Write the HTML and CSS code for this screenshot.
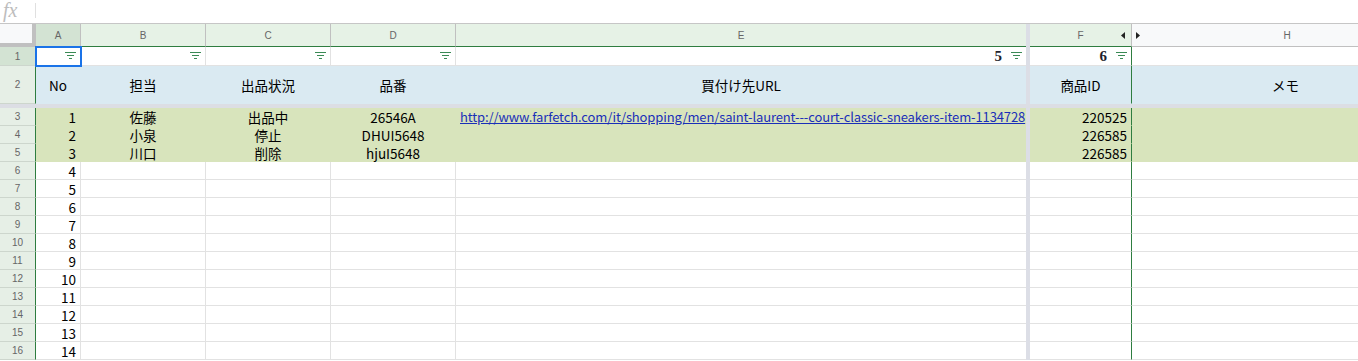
FILE: index.html
```html
<!DOCTYPE html>
<html lang="ja">
<head>
<meta charset="utf-8">
<title>Sheet</title>
<link rel="stylesheet" href="styles.css">
</head>
<body>
<div class="fbar"><span class="fx">fx</span><span class="fsep"></span></div>
<div class="sheet">
  <div class="row hdr">
    <div class="corner"></div>
    <div class="ch act">A</div>
    <div class="ch">B</div>
    <div class="ch">C</div>
    <div class="ch">D</div>
    <div class="ch ce">E</div>
    <div class="fz"></div>
    <div class="ch cf">F<svg class="arr al" width="4" height="7" viewBox="0 0 4 7"><path d="M4 0v7L0 3.5z" fill="#222"/></svg></div>
    <div class="ch off"><svg class="arr ar" width="4" height="7" viewBox="0 0 4 7"><path d="M0 0v7l4-3.5z" fill="#222"/></svg>H</div>
  </div>
  <div class="row flt">
    <div class="rh act">1</div>
    <div class="c sel"><svg class="fi" width="11" height="8" viewBox="0 0 11 8"><path d="M0 .5h11M2 3.5h7M4 6.5h3" stroke="#3a8a55" stroke-width="1"/></svg></div>
    <div class="c"><svg class="fi" width="11" height="8" viewBox="0 0 11 8"><path d="M0 .5h11M2 3.5h7M4 6.5h3" stroke="#3a8a55" stroke-width="1"/></svg></div>
    <div class="c"><svg class="fi" width="11" height="8" viewBox="0 0 11 8"><path d="M0 .5h11M2 3.5h7M4 6.5h3" stroke="#3a8a55" stroke-width="1"/></svg></div>
    <div class="c"><svg class="fi" width="11" height="8" viewBox="0 0 11 8"><path d="M0 .5h11M2 3.5h7M4 6.5h3" stroke="#3a8a55" stroke-width="1"/></svg></div>
    <div class="c ce"><b class="cnt">5</b><svg class="fi" width="11" height="8" viewBox="0 0 11 8"><path d="M0 .5h11M2 3.5h7M4 6.5h3" stroke="#3a8a55" stroke-width="1"/></svg></div>
    <div class="fz"></div>
    <div class="c cf"><b class="cnt">6</b><svg class="fi" width="11" height="8" viewBox="0 0 11 8"><path d="M0 .5h11M2 3.5h7M4 6.5h3" stroke="#3a8a55" stroke-width="1"/></svg></div>
    <div class="c ch0"></div>
  </div>
  <div class="row hd">
    <div class="rh">2</div>
    <div class="c m">No</div>
    <div class="c m">担当</div>
    <div class="c m">出品状況</div>
    <div class="c m">品番</div>
    <div class="c m ce">買付け先URL</div>
    <div class="fz"></div>
    <div class="c m cf">商品ID</div>
    <div class="c m ch0">メモ</div>
  </div>
  <div class="fzrow"></div>
  <div class="row ol">
    <div class="rh">3</div>
    <div class="c r">1</div>
    <div class="c m">佐藤</div>
    <div class="c m">出品中</div>
    <div class="c m">26546A</div>
    <div class="c ce url"><a class="lnk" href="#">http://www.farfetch.com/it/shopping/men/saint-laurent---court-classic-sneakers-item-1134728</a></div>
    <div class="fz"></div>
    <div class="c r cf">220525</div>
    <div class="c ch0"></div>
  </div>
  <div class="row ol">
    <div class="rh">4</div>
    <div class="c r">2</div>
    <div class="c m">小泉</div>
    <div class="c m">停止</div>
    <div class="c m">DHUI5648</div>
    <div class="c ce"></div>
    <div class="fz"></div>
    <div class="c r cf">226585</div>
    <div class="c ch0"></div>
  </div>
  <div class="row ol">
    <div class="rh">5</div>
    <div class="c r">3</div>
    <div class="c m">川口</div>
    <div class="c m">削除</div>
    <div class="c m">hjuI5648</div>
    <div class="c ce"></div>
    <div class="fz"></div>
    <div class="c r cf">226585</div>
    <div class="c ch0"></div>
  </div>
  <div class="row"><div class="rh">6</div><div class="c r">4</div><div class="c"></div><div class="c"></div><div class="c"></div><div class="c ce"></div><div class="fz"></div><div class="c cf"></div><div class="c ch0"></div></div>
  <div class="row"><div class="rh">7</div><div class="c r">5</div><div class="c"></div><div class="c"></div><div class="c"></div><div class="c ce"></div><div class="fz"></div><div class="c cf"></div><div class="c ch0"></div></div>
  <div class="row"><div class="rh">8</div><div class="c r">6</div><div class="c"></div><div class="c"></div><div class="c"></div><div class="c ce"></div><div class="fz"></div><div class="c cf"></div><div class="c ch0"></div></div>
  <div class="row"><div class="rh">9</div><div class="c r">7</div><div class="c"></div><div class="c"></div><div class="c"></div><div class="c ce"></div><div class="fz"></div><div class="c cf"></div><div class="c ch0"></div></div>
  <div class="row"><div class="rh">10</div><div class="c r">8</div><div class="c"></div><div class="c"></div><div class="c"></div><div class="c ce"></div><div class="fz"></div><div class="c cf"></div><div class="c ch0"></div></div>
  <div class="row"><div class="rh">11</div><div class="c r">9</div><div class="c"></div><div class="c"></div><div class="c"></div><div class="c ce"></div><div class="fz"></div><div class="c cf"></div><div class="c ch0"></div></div>
  <div class="row"><div class="rh">12</div><div class="c r">10</div><div class="c"></div><div class="c"></div><div class="c"></div><div class="c ce"></div><div class="fz"></div><div class="c cf"></div><div class="c ch0"></div></div>
  <div class="row"><div class="rh">13</div><div class="c r">11</div><div class="c"></div><div class="c"></div><div class="c"></div><div class="c ce"></div><div class="fz"></div><div class="c cf"></div><div class="c ch0"></div></div>
  <div class="row"><div class="rh">14</div><div class="c r">12</div><div class="c"></div><div class="c"></div><div class="c"></div><div class="c ce"></div><div class="fz"></div><div class="c cf"></div><div class="c ch0"></div></div>
  <div class="row"><div class="rh">15</div><div class="c r">13</div><div class="c"></div><div class="c"></div><div class="c"></div><div class="c ce"></div><div class="fz"></div><div class="c cf"></div><div class="c ch0"></div></div>
  <div class="row"><div class="rh">16</div><div class="c r">14</div><div class="c"></div><div class="c"></div><div class="c"></div><div class="c ce"></div><div class="fz"></div><div class="c cf"></div><div class="c ch0"></div></div>
</div>
</body>
</html>
```

FILE: styles.css
```css
* { box-sizing: border-box; }
html, body { margin: 0; padding: 0; }
body {
  width: 1358px;
  height: 361px;
  overflow: hidden;
  background: #fff;
  font-family: "Noto Sans CJK JP", "Noto Sans", sans-serif;
  color: #000;
}
.fbar {
  height: 24px;
  display: flex;
  align-items: center;
  border-bottom: 1px solid #c6c6c6;
}
.fx {
  width: 35px;
  padding-left: 3px;
  font-family: "Liberation Serif", serif;
  font-style: italic;
  font-size: 20px;
  color: #bdbdbd;
  line-height: 1;
  margin-top: -3px;
}
.fsep {
  width: 1px;
  height: 15px;
  background: #e0e0e0;
  margin-top: -2px;
}
.sheet {
  display: grid;
  grid-template-columns: 36px 45px 125px 125px 125px 570px 4px 102px 226px;
  grid-template-rows: 23px 19px 38px 4px repeat(14, 18px);
  width: 1358px;
}
.row { display: contents; }
.corner {
  background: #f8f9fa;
  border-right: 4px solid #c0c0c0;
  border-bottom: 4px solid #c0c0c0;
}
.ch {
  position: relative;
  display: flex;
  align-items: center;
  justify-content: center;
  background: #e6f2e6;
  border-right: 1px solid #c0c0c0;
  border-bottom: 1px solid #2e7d40;
  font-family: "Liberation Sans", Arial, sans-serif;
  font-size: 10px;
  color: #666;
  padding-top: 1px;
}
.ch.act { background: #d3e3d3; }
.ch.ce { border-right: none; }
.ch.off {
  background: #f8f9fa;
  border-bottom-color: #c0c0c0;
  border-right: none;
  padding-left: 84px;
}
.arr { position: absolute; top: 8px; }
.al { right: 6px; }
.ar { left: 4px; }
.fz { background: #dcdee6; }
.fzrow { grid-column: 1 / -1; background: #dcdee4; }
.rh {
  display: flex;
  align-items: center;
  justify-content: center;
  background: #e6efe6;
  border-right: 1px solid #2e7d40;
  border-bottom: 1px solid #cdd6cd;
  font-family: "Liberation Sans", Arial, sans-serif;
  font-size: 10px;
  color: #666;
}
.rh.act { background: #d3e3d3; }
.c {
  display: flex;
  align-items: center;
  padding: 0 3px;
  border-right: 1px solid #e2e2e2;
  border-bottom: 1px solid #e2e2e2;
  font-size: 13.5px;
  white-space: nowrap;
  line-height: 16px;
}
.c.r { justify-content: flex-end; padding-right: 4px; }
.c.m { justify-content: center; }
.c.ce { border-right: none; }
.c.cf { border-right-color: #2e7d40; }
.c.ch0 { border-right: none; }
.c.m.ch0 { padding-left: 84px; }
.c.url { overflow-x: clip; }
.flt .c {
  justify-content: flex-end;
  gap: 9px;
  padding-right: 4px;
  border-bottom-color: #e2e2e2;
}
.flt .c.sel {
  outline: 2px solid #1a73e8;
  outline-offset: -1px;
  position: relative;
  z-index: 1;
}
.fi { display: block; }
.cnt {
  font-family: "Liberation Serif", serif;
  font-weight: bold;
  font-size: 15px;
  color: #1f1f2e;
}
.hd .c { background: #daeaf2; border-bottom-color: #daeaf2; border-right-color: #daeaf2; }
.hd .c.cf { border-right-color: #2e7d40; }
.ol .c { background: #d8e4bc; border-bottom-color: #d8e4bc; border-right-color: #d8e4bc; }
.ol .c.cf { border-right-color: #2e7d40; }
.lnk {
  color: #1a2fb8;
  text-decoration: underline;
  font-size: 13px;
  letter-spacing: -0.12px;
  padding-left: 1px;
}
```
